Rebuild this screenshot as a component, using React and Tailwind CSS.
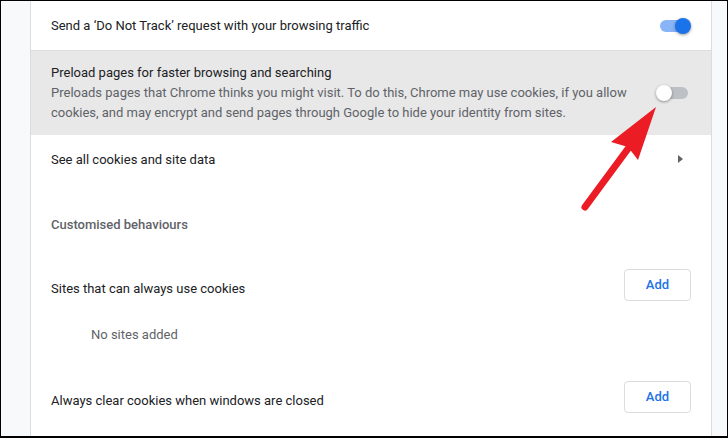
import React from 'react';

const font = { fontFamily: 'Roboto, "Liberation Sans", sans-serif' };

function Toggle({ on }) {
  return (
    <div className="relative w-[35px] h-4 shrink-0">
      <div className={`absolute left-1 right-[3px] top-[2px] h-3 rounded-full ${on ? 'bg-[#8ab4f8]' : 'bg-[#bdc1c6]'}`} />
      <div
        className={`absolute top-0 w-4 h-4 rounded-full shadow-[0_1px_3px_rgba(0,0,0,0.4)] ${on ? 'right-0 bg-[#1a73e8]' : 'left-0 bg-white'}`}
      />
    </div>
  );
}

function AddButton() {
  return (
    <button className="w-[67px] h-8 border border-[#dadce0] rounded bg-white text-[13px] font-medium text-[#1a73e8]">
      Add
    </button>
  );
}

export default function App() {
  return (
    <div
      className="relative w-[728px] h-[438px] overflow-hidden bg-[#f8f9fa] border-t border-l border-r border-b-2 border-black flex"
      style={font}
    >
      <div className="ml-[29px] w-[682px] h-full bg-white border-l border-r border-[#dadce0] flex flex-col text-[13px] text-[#202124]">
        {/* Do not track */}
        <div className="h-[49px] shrink-0 flex items-center justify-between pl-5 pr-5">
          <span>Send a ‘Do Not Track’ request with your browsing traffic</span>
          <Toggle on />
        </div>

        {/* Preload */}
        <div className="h-[85px] shrink-0 flex items-center justify-between pl-5 pr-5 bg-[#e8e8e8] border-t border-[#dddddd]">
          <div className="leading-5">
            <div>Preload pages for faster browsing and searching</div>
            <div className="text-[#5f6368]">
              Preloads pages that Chrome thinks you might visit. To do this, Chrome may use cookies, if you allow
              <br />
              cookies, and may encrypt and send pages through Google to hide your identity from sites.
            </div>
          </div>
          <Toggle />
        </div>

        {/* See all cookies */}
        <div className="h-12 shrink-0 flex items-center justify-between pl-5 pr-[28px]">
          <span className="pt-[2px]">See all cookies and site data</span>
          <span className="w-0 h-0 border-t-[4.5px] border-b-[4.5px] border-l-[5px] border-t-transparent border-b-transparent border-l-[#5f6368]" />
        </div>

        {/* Header */}
        <div className="h-[82px] shrink-0 flex items-center pl-5 pt-[2px] font-medium text-[#5f6368]">
          Customised behaviours
        </div>

        <div className="h-10 shrink-0 flex items-center justify-between pl-5 pr-5">
          <span className="pt-[7px]">Sites that can always use cookies</span>
          <AddButton />
        </div>

        <div className="h-[58px] shrink-0 flex items-center pl-[60px] pt-[2px] text-[#5f6368]">
          No sites added
        </div>

        <div className="mt-[14px] h-10 shrink-0 flex items-center justify-between pl-5 pr-5">
          <span className="pt-[7px]">Always clear cookies when windows are closed</span>
          <AddButton />
        </div>
      </div>

      {/* red annotation arrow */}
      <svg className="absolute left-[-1px] top-[-1px] pointer-events-none" width="728" height="438" viewBox="0 0 728 438">
        <line x1="585" y1="207" x2="630" y2="146" stroke="#ec1c24" strokeWidth="7" strokeLinecap="round" />
        <polygon points="656,107 611,142 628,147 638,160" fill="#ec1c24" />
      </svg>
    </div>
  );
}
